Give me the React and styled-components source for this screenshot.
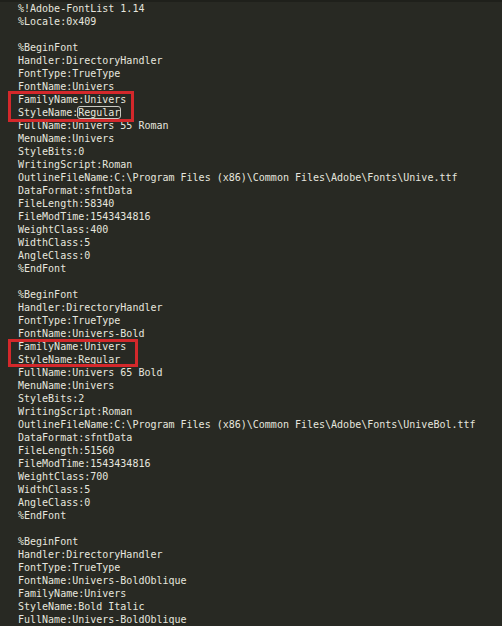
import styled, { createGlobalStyle } from 'styled-components'

const GlobalStyle = createGlobalStyle`
  html, body {
    margin: 0;
    padding: 0;
    background: #282923;
  }
`

const Editor = styled.div`
  width: 502px;
  height: 626px;
  overflow: hidden;
  box-sizing: border-box;
  background: #282923;
  border-top: 2px solid #1f201b;
  padding: 0 0 0 18px;
  font-family: 'DejaVu Sans Mono', 'Liberation Mono', monospace;
  font-size: 10px;
  line-height: 13px;
  color: #e6e6df;
`

const Line = styled.div`
  white-space: pre;
  height: 13px;
`

const Marked = styled.div`
  position: relative;

  &::after {
    content: '';
    position: absolute;
    left: -10px;
    top: ${(p) => p.$top}px;
    width: ${(p) => p.$width}px;
    height: ${(p) => p.$height}px;
    border: 3px solid #d3282b;
    box-sizing: border-box;
    pointer-events: none;
  }
`

const Match = styled.span`
  border: 1px solid #c9c9c2;
  border-radius: 3px;
  margin: -1px -1px;
  padding: 0;
`

const head = ['%!Adobe-FontList 1.14', '%Locale:0x409', '']

function FontBlock({ font, box }) {
  const before = [
    '%BeginFont',
    'Handler:DirectoryHandler',
    'FontType:TrueType',
    `FontName:${font.name}`,
  ]
  const after = [
    `FullName:${font.full}`,
    'MenuName:Univers',
    `StyleBits:${font.bits}`,
    'WritingScript:Roman',
    `OutlineFileName:C:\\Program Files (x86)\\Common Files\\Adobe\\Fonts\\${font.file}`,
    'DataFormat:sfntData',
    `FileLength:${font.length}`,
    'FileModTime:1543434816',
    `WeightClass:${font.weight}`,
    'WidthClass:5',
    'AngleClass:0',
    '%EndFont',
    '',
  ]
  return (
    <>
      {before.map((t, i) => (
        <Line key={i}>{t}</Line>
      ))}
      <Marked $top={box.top} $width={box.width} $height={box.height}>
        <Line>FamilyName:Univers</Line>
        <Line>
          StyleName:{font.matched ? <Match>Regular</Match> : 'Regular'}
        </Line>
      </Marked>
      {after.map((t, i) => (
        <Line key={i}>{t}</Line>
      ))}
    </>
  )
}

const fonts = [
  {
    name: 'Univers',
    full: 'Univers 55 Roman',
    bits: 0,
    file: 'Unive.ttf',
    length: 58340,
    weight: 400,
    matched: true,
    box: { top: -2, width: 126, height: 31 },
  },
  {
    name: 'Univers-Bold',
    full: 'Univers 65 Bold',
    bits: 2,
    file: 'UniveBol.ttf',
    length: 51560,
    weight: 700,
    matched: false,
    box: { top: -1, width: 130, height: 28 },
  },
]

const tail = [
  '%BeginFont',
  'Handler:DirectoryHandler',
  'FontType:TrueType',
  'FontName:Univers-BoldOblique',
  'FamilyName:Univers',
  'StyleName:Bold Italic',
  'FullName:Univers-BoldOblique',
]

export default function App() {
  return (
    <>
      <GlobalStyle />
      <Editor>
        {head.map((t, i) => (
          <Line key={i}>{t}</Line>
        ))}
        {fonts.map((f) => (
          <FontBlock key={f.name} font={f} box={f.box} />
        ))}
        {tail.map((t, i) => (
          <Line key={i}>{t}</Line>
        ))}
      </Editor>
    </>
  )
}
